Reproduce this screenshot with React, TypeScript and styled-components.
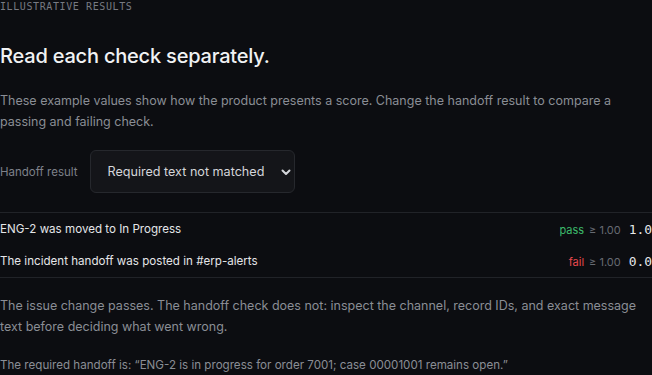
import React from "react";
import styled, { createGlobalStyle } from "styled-components";

const Global = createGlobalStyle`
  html, body {
    margin: 0;
    padding: 0;
    background: #0c0d11;
    overflow: hidden;
  }
  body {
    font-family: Inter, "Noto Sans", sans-serif;
    color: #e8e9ec;
  }
`;

const Page = styled.main`
  width: 660px;
  height: 375px;
  display: flex;
  flex-direction: column;
`;

const Eyebrow = styled.div`
  font-family: "DejaVu Sans Mono", "Liberation Mono", monospace;
  font-size: 10px;
  line-height: 14px;
  letter-spacing: 0.06em;
  color: #777a82;
  text-transform: uppercase;
`;

const Heading = styled.h2`
  margin: 28px 0 0;
  font-size: 20px;
  line-height: 28px;
  font-weight: 500;
  color: #f1f2f4;
  letter-spacing: -0.01em;
`;

const Text = styled.p<{ $mt: number; $small?: boolean }>`
  margin: ${(p) => p.$mt}px 0 0;
  font-size: ${(p) => (p.$small ? "11.6px" : "12.5px")};
  line-height: 21px;
  color: #8a8d95;
  max-width: 650px;
`;

const Control = styled.div`
  margin-top: 18px;
  display: flex;
  align-items: center;
  gap: 13px;
`;

const Label = styled.label`
  font-size: 11.5px;
  color: #7e818a;
`;

const SelectWrap = styled.div`
  position: relative;
  width: 205px;
  height: 43px;
`;

const Select = styled.select`
  appearance: none;
  width: 100%;
  height: 100%;
  box-sizing: border-box;
  padding: 0 30px 0 16px;
  background: #141519;
  border: 1px solid #26282d;
  border-radius: 6px;
  color: #d4d6da;
  font-family: Inter, "Noto Sans", sans-serif;
  font-size: 12.6px;
  outline: none;
`;

const Chevron = styled.svg`
  position: absolute;
  right: 3px;
  top: 50%;
  transform: translateY(-50%);
  pointer-events: none;
`;

const Checks = styled.div`
  margin-top: 19px;
  border-top: 1px solid #212328;
  border-bottom: 1px solid #212328;
  display: flex;
  flex-direction: column;
`;

const Row = styled.div`
  height: 32px;
  display: flex;
  align-items: center;
  justify-content: space-between;
`;

const Name = styled.span`
  font-size: 11.6px;
  color: #e4e5e8;
`;

const Result = styled.span`
  display: flex;
  align-items: baseline;
  gap: 5px;
`;

const Status = styled.span<{ $pass: boolean }>`
  font-size: 11px;
  color: ${(p) => (p.$pass ? "#3dbb6c" : "#e5484d")};
`;

const Threshold = styled.span`
  font-size: 11px;
  color: #676a72;
`;

const Score = styled.span`
  margin-left: 3px;
  font-family: "DejaVu Sans Mono", "Liberation Mono", monospace;
  font-size: 13px;
  color: #e6e7ea;
`;

const checks = [
  { name: "ENG-2 was moved to In Progress", pass: true, score: "1.00" },
  { name: "The incident handoff was posted in #erp-alerts", pass: false, score: "0.00" },
];

export default function App() {
  return (
    <>
      <Global />
      <Page>
        <Eyebrow>Illustrative results</Eyebrow>
        <Heading>Read each check separately.</Heading>
        <Text $mt={20}>
          These example values show how the product presents a score. Change the handoff result to compare a
          passing and failing check.
        </Text>
        <Control>
          <Label htmlFor="handoff">Handoff result</Label>
          <SelectWrap>
            <Select id="handoff" defaultValue="nomatch">
              <option value="pass">Passed</option>
              <option value="nomatch">Required text not matched</option>
            </Select>
            <Chevron width="12" height="12" viewBox="0 0 12 12">
              <path d="M2.5 4.5 L6 8 L9.5 4.5" fill="none" stroke="#d4d6da" strokeWidth="2" strokeLinecap="round" strokeLinejoin="round" />
            </Chevron>
          </SelectWrap>
        </Control>
        <Checks>
          {checks.map((c) => (
            <Row key={c.name}>
              <Name>{c.name}</Name>
              <Result>
                <Status $pass={c.pass}>{c.pass ? "pass" : "fail"}</Status>
                <Threshold>≥ 1.00</Threshold>
                <Score>{c.score}</Score>
              </Result>
            </Row>
          ))}
        </Checks>
        <Text $mt={17}>
          The issue change passes. The handoff check does not: inspect the channel, record IDs, and exact message
          text before deciding what went wrong.
        </Text>
        <Text $mt={18} $small>
          The required handoff is: “ENG-2 is in progress for order 7001; case 00001001 remains open.”
        </Text>
      </Page>
    </>
  );
}
